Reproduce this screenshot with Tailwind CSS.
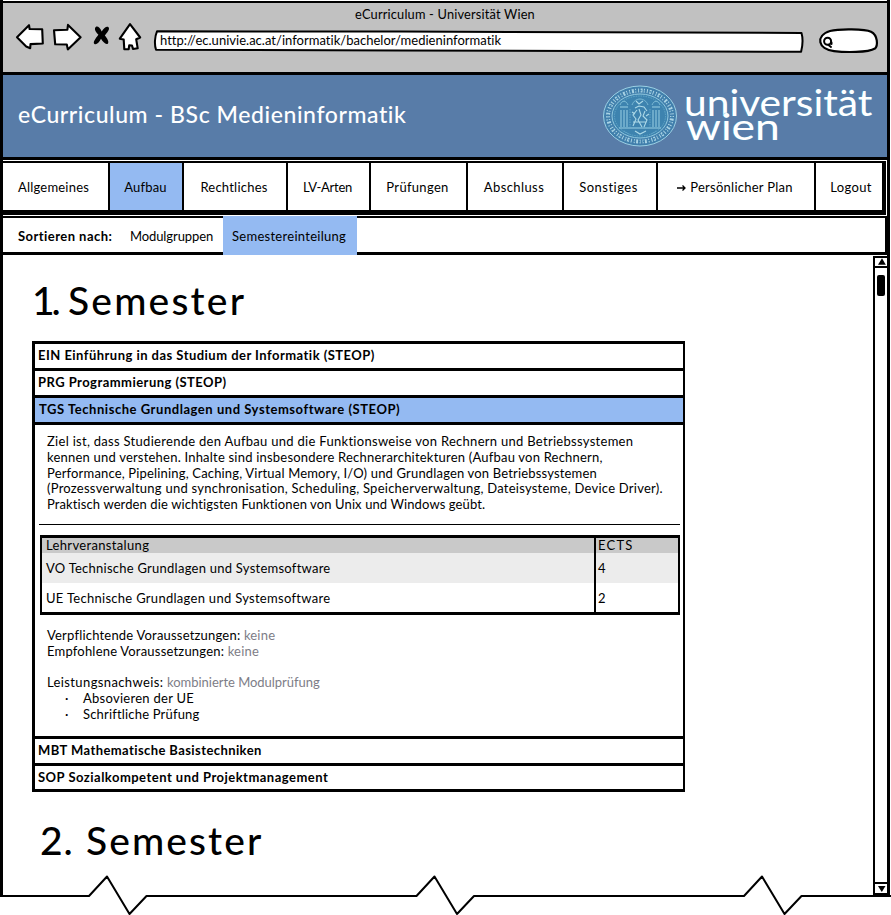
<!DOCTYPE html>
<html lang="de">
<head>
<meta charset="utf-8">
<title>eCurriculum - Universität Wien</title>
<script src="https://cdn.jsdelivr.net/npm/@tailwindcss/browser@4"></script>
</head>
<body class="bg-white">
<div class="relative h-[915px] w-[891px] overflow-hidden bg-white font-[Lato,sans-serif] text-[13px] leading-[16px] text-black whitespace-nowrap">
  <div class="mr-px flex h-[896px] flex-col border-x-[3px] border-black pt-px">

    <!-- browser chrome -->
    <header class="relative h-[74px] shrink-0 border-t-2 border-b-[3px] border-black bg-[#c1c1c1]">
      <svg class="absolute -top-[3px] -left-[3px] h-[74px] w-[891px]" viewBox="0 0 891 74" fill="none" stroke="#000" stroke-width="2.1" stroke-linejoin="round" stroke-linecap="round">
        <path fill="#fff" d="M17 37.3 29 25.2l.6 3.8 12.6.3.6 14.2-12.3.6-.3 4.2-4-1.800z"/>
        <path fill="#fff" d="M54 30.2l13.4-.5.6-4.8L80.6 37.2 67.8 49.4l-1-4.9-11.6-.2z"/>
        <path stroke="none" fill="#000" d="M95 28.2c1-3 4.6-1.800 6.700 3.300C104 27.500 107 25.800 108.500 27.200c1.800 2-1.500 5.400-3.700 8.300 2.500 3 4.400 6 3.200 8-2 1.800-5-1.500-7-4.700-2 3.800-4.500 6.400-6.600 5.200-1.800-1.600 1-5.400 4-9.200-2.400-2.600-3.900-4.800-3.400-6.600z"/>
        <path fill="#fff" d="M130 24.200 140.200 37.500l-4 1.800 1.500 9-4.700.700-1-3.500-2.800-.2-.5 3.800-4.400.200-.6-9.700-3.900-.9z"/>
        <path fill="#fff" stroke-width="2" d="M157 31.300 400 31.500 801.500 33c1.700 6 .8 14-.4 18.800L650 51.200 400 50.600 156 49.700c-1.800-5-1.200-13.500 1-18.400z"/>
        <path fill="#fff" stroke-width="2.200" d="M830 31c9-2.400 35-2.100 41 .700 7 3.600 7 14 4 16.800-7 4.200-30 4-41 2.600-16-1.700-19-15.300-4-20.100z"/>
        <circle cx="827.600" cy="41.300" r="3.500" stroke-width="2"/>
        <path stroke-width="2" d="m828.500 45 2.500 2M831.500 42.500v1.500"/>
      </svg>
      <div class="relative flex h-[21px] items-center justify-center text-[12.800px] tracking-[0.180px]">eCurriculum - Universität Wien</div>
      <div class="relative ml-[157px] mt-[8px] tracking-[0.020px]">http://ec.univie.ac.at/informatik/bachelor/medieninformatik</div>
    </header>

    <!-- title bar -->
    <div class="flex h-[85px] shrink-0 items-start border-b-[3px] border-black bg-[#587ca8] text-white">
      <h1 class="ml-[15px] mt-[26px] w-[584px] text-[23px] leading-[27px] font-medium tracking-[0.580px]">eCurriculum - BSc Medieninformatik</h1>
      <svg class="mt-[10px] h-[62px] w-[76px] shrink-0" viewBox="0 0 76 62" fill="none" stroke="#9bd0e4">
        <ellipse cx="38" cy="31" rx="36.500" ry="30" fill="#417fac" stroke-width="1"/>
        <ellipse cx="38" cy="31" rx="32" ry="25.500" stroke="#a9d3e5" stroke-width="4" stroke-dasharray="1 1.600 2 1.300 1 2"/>
        <ellipse cx="38" cy="31" rx="32" ry="25.500" stroke="#3e81ad" stroke-width="1.200" stroke-dasharray="2 3"/>
        <ellipse cx="38" cy="31" rx="28" ry="22" fill="#3d83af" stroke-width=".9"/>
        <ellipse cx="38" cy="31" rx="25.500" ry="20" stroke="#70b1d0" stroke-width=".7" stroke-dasharray="1.500 1"/>
        <path d="M18 22h8M19 25v17M22 25v17M25 25v17M50 22h8M51 25v17M54 25v17M57 25v17M17 43h42" stroke-width="1"/>
        <path d="M18 20c2-5 6-5 8 0M50 20c2-5 6-5 8 0M30 20c3-8 13-8 16 0" stroke="#7dbbd6"/>
        <path d="M34 16l3 3 4-3M33 23l4-2 5 1 3 4M35 25l-4 5 3 4-3 7M37 24l2 6-3 5 4 7M43 26l-2 5 4 4-3 7M31 37h13M30 27l3 2M44 31l3-2M33 46l5 3 6-3" stroke="#add9e8" stroke-width="1.100"/>
        <path d="M28 24v18M48 24v18M22 46l5 3M54 46l-5 3" stroke="#64a6c9" stroke-dasharray="1.500 1"/>
      </svg>
      <div class="ml-[6px] mt-[15px] text-[37px] leading-[24px] text-white [text-shadow:0_0_1px_#45a0c8]">
        <div class="w-fit origin-left scale-x-[1.100]">universität</div>
        <div class="ml-[2px] w-fit origin-left scale-x-[1.200]">wien</div>
      </div>
    </div>

    <!-- main navigation -->
    <nav class="relative mt-px mr-px flex h-[54px] shrink-0 border-t-2 border-r-4 border-b-[5px] border-black text-center leading-[48px]">
      <a class="w-[107px] border-r-2 border-black pr-1 tracking-[0.200px]">Allgemeines</a>
      <a class="w-[74px] border-r-2 border-black bg-[#94baf2] pr-px tracking-[0.150px]">Aufbau</a>
      <a class="w-[104px] border-r-2 border-black pr-[2px] tracking-[0.220px]">Rechtliches</a>
      <a class="w-[83px] border-r-2 border-black pr-[2px] tracking-[-0.250px]">LV-Arten</a>
      <a class="w-[97px] border-r-2 border-black pr-[2px] tracking-[0.310px]">Prüfungen</a>
      <a class="w-[96px] border-r-2 border-black pr-[2px] tracking-[0.410px]">Abschluss</a>
      <a class="w-[94px] border-r-2 border-black pr-[3px] tracking-[0.480px]">Sonstiges</a>
      <a class="flex w-[158px] items-center justify-center gap-[4px] border-r-2 border-black pr-[2px] tracking-[0.260px]">
        <svg class="h-[8px] w-[9px]" viewBox="0 0 9 8" fill="none" stroke="#000" stroke-width="1.300"><path d="M0 5h8M5.500 2.500 8 5 5.500 7.500"/></svg>Persönlicher Plan</a>
      <a class="flex-1 pl-[4px] tracking-[0.310px]">Logout</a>
    </nav>

    <!-- sort bar -->
    <div class="mt-px flex h-[39px] shrink-0 bg-white">
      <div class="w-[220px] border-t-2 border-b-[3px] border-black leading-[37px]">
        <b class="ml-[15px] inline-block w-[112px] tracking-[0.450px]">Sortieren nach:</b><span class="tracking-[-0.100px]">Modulgruppen</span>
      </div>
      <div class="w-[134px] bg-[#94baf2] pl-[9px] leading-[41px] tracking-[0.280px]">Semestereinteilung</div>
      <div class="flex-1 border-t-2 border-r-2 border-b-[3px] border-black"></div>
    </div>

    <div class="flex min-h-0 flex-1">
      <main class="flex-1 pl-[29px]">
        <h2 class="mt-[22px] flex h-[64px] text-[39px] leading-[46px] font-medium"><span class="w-[36px] tracking-[-3px]">1.</span><span class="tracking-[2.200px]">Semester</span></h2>

        <section class="w-[653px] border-l-[3px] border-r-2 border-b-[3px] border-black">
          <h3 class="h-[27px] border-t-[3px] border-black pl-[3px] leading-[23px] font-bold tracking-[0.470px]">EIN Einführung in das Studium der Informatik (STEOP)</h3>
          <h3 class="h-[27px] border-t-[3px] border-black pl-[3px] leading-[23px] font-bold tracking-[0.460px]">PRG Programmierung (STEOP)</h3>
          <h3 class="h-[27px] border-t-[3px] border-black bg-[#94baf2] pl-[4px] leading-[23px] font-bold tracking-[0.540px]">TGS Technische Grundlagen und Systemsoftware (STEOP)</h3>
          <div class="h-[314px] border-t-[3px] border-black pt-[9px] leading-[15.800px]">
            <div class="pl-[12px]">
              <p class="tracking-[0.290px]">Ziel ist, dass Studierende den Aufbau und die Funktionsweise von Rechnern und Betriebssystemen</p>
              <p class="tracking-[0.210px]">kennen und verstehen. Inhalte sind insbesondere Rechnerarchitekturen (Aufbau von Rechnern,</p>
              <p class="tracking-[0.170px]">Performance, Pipelining, Caching, Virtual Memory, I/O) und Grundlagen von Betriebssystemen</p>
              <p class="tracking-[0.250px]">(Prozessverwaltung und synchronisation, Scheduling, Speicherverwaltung, Dateisysteme, Device Driver).</p>
              <p class="tracking-[0.110px]">Praktisch werden die wichtigsten Funktionen von Unix und Windows geübt.</p>
            </div>
            <hr class="mt-[11px] ml-[4px] w-[641px] border-t border-black">
            <div class="mt-[10px] ml-[5px] grid w-[640px] grid-cols-[1fr_82px] grid-rows-[15px_30px_29px] border-x-2 border-t-[3px] border-b-[3px] border-black">
              <div class="border-r-2 border-black bg-[#c9c9c9] pl-[4px] tracking-[0.340px]">Lehrveranstalung</div>
              <div class="bg-[#c9c9c9] pl-[2px] tracking-[1.200px]">ECTS</div>
              <div class="border-r-2 border-black bg-[#ececec] pl-[4px] leading-[30px] tracking-[0.250px]">VO Technische Grundlagen und Systemsoftware</div>
              <div class="bg-[#ececec] pl-[2px] leading-[30px]">4</div>
              <div class="border-r-2 border-black pl-[4px] leading-[30px] tracking-[0.290px]">UE Technische Grundlagen und Systemsoftware</div>
              <div class="pl-[2px] leading-[30px]">2</div>
            </div>
            <div class="pt-[13px] pl-[12px] tracking-[0.200px]">
              <p>Verpflichtende Voraussetzungen: <span class="text-[#7d7d87]">keine</span></p>
              <p>Empfohlene Voraussetzungen: <span class="text-[#7d7d87]">keine</span></p>
              <p class="mt-[15.800px]"><span class="tracking-[0.380px]">Leistungsnachweis: </span><span class="text-[#7d7d87] tracking-[-0.030px]">kombinierte Modulprüfung</span></p>
              <ul class="pl-[18px]">
                <li class="flex tracking-[0.270px]"><span class="w-[18px]">·</span>Absovieren der UE</li>
                <li class="flex tracking-[0.180px]"><span class="w-[18px]">·</span>Schriftliche Prüfung</li>
              </ul>
            </div>
          </div>
          <h3 class="h-[27px] border-t-[3px] border-black pl-[3px] leading-[23px] font-bold tracking-[0.410px]">MBT Mathematische Basistechniken</h3>
          <h3 class="h-[26px] border-t-[3px] border-black pl-[3px] leading-[23px] font-bold tracking-[0.480px]">SOP Sozialkompetent und Projektmanagement</h3>
        </section>

        <h2 class="mt-[25px] flex pl-[8px] text-[39px] leading-[46px] font-medium"><span class="w-[46px] tracking-[1px]">2.</span><span class="tracking-[2.100px]">Semester</span></h2>
      </main>

      <!-- vertical scrollbar -->
      <div class="mt-px mb-px flex w-[14px] flex-col border-y-2 border-l-2 border-black">
        <svg class="h-[10px] w-[12px] border-b-2 border-black" viewBox="0 0 12 8"><path d="M7 .2 10.800 6.800H3z"/></svg>
        <div class="mt-[7px] ml-[2px] h-[21px] w-[8px] rounded-[2px] bg-black"></div>
        <svg class="mt-auto h-[11px] w-[12px] border-t-2 border-black" viewBox="0 0 12 9"><path d="M3 2h7.500L6.800 8z"/></svg>
      </div>
    </div>
  </div>

  <!-- torn lower edge of the window -->
  <svg class="absolute top-[870px] left-0 h-[45px] w-[891px]" viewBox="0 870 891 45">
    <path fill="none" stroke="#000" stroke-width="2" stroke-linejoin="round" d="M0 896H89L107 876.500 129.500 914 146.500 896H416.500L434.500 876.500 457 914 474 896H744L762 876.500 784.500 914 801.500 896H891"/>
  </svg>
</div>
</body>
</html>
